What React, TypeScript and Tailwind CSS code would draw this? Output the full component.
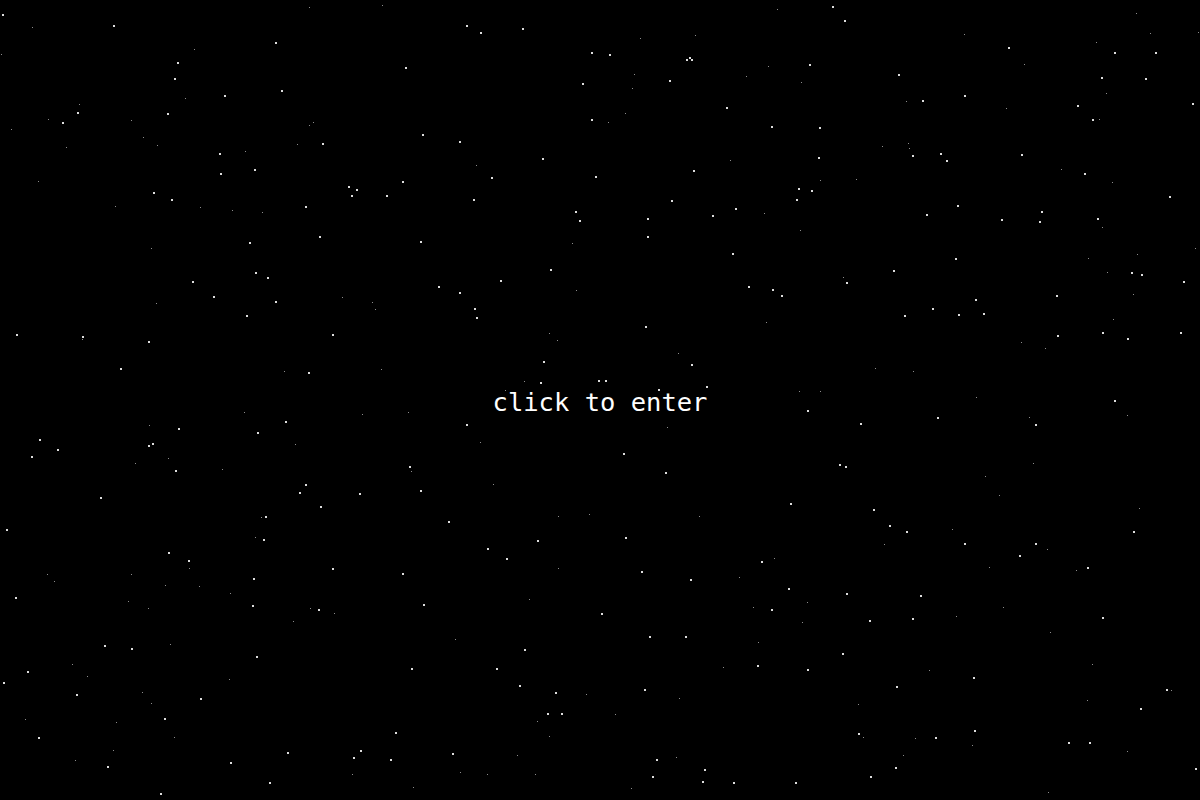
import React from "react";

// [x, y, size] — size 2 are the bright stars, size 1 the faint ones
const stars: [number, number, number][] = [
  [2,14,2],[113,25,2],[275,42,2],[177,62,2],[174,78,2],[281,90,2],[224,95,2],[77,112,2],[62,122,2],[167,113,2],
  [322,143,2],[219,153,2],[254,169,2],[220,173,2],[348,186,2],[356,189,2],[351,195,2],[386,195,2],[153,192,2],[171,199,2],
  [305,206,2],[319,236,2],[249,242,2],
  [32,27,1],[309,7,1],[382,5,1],[1,54,1],[194,49,1],[185,98,1],[79,104,1],[48,119,1],[131,120,1],[11,129,1],
  [143,137,1],[157,145,1],[66,147,1],[245,151,1],[309,125,1],[313,122,1],[297,144,1],[38,181,1],[115,206,1],[200,207,1],
  [232,210,1],[262,212,1],[151,248,1],

  [466,25,2],[480,32,2],[522,28,2],[405,67,2],[591,52,2],[609,54,2],[686,59,2],[689,57,2],[691,59,2],[669,80,2],
  [582,83,2],[726,107,2],[771,126,2],[591,119,2],[422,134,2],[459,141,2],[542,158,2],[693,170,2],[402,181,2],[491,177,2],
  [595,176,2],[798,188,2],[796,199,2],[473,199,2],[671,200,2],[735,208,2],[712,215,2],[575,211,2],[579,220,2],[647,218,2],
  [647,236,2],[420,241,2],[732,253,2],
  [777,9,1],[640,38,1],[695,35,1],[768,66,1],[746,76,1],[634,74,1],[632,88,1],[625,113,1],[608,122,1],[476,165,1],
  [730,160,1],[764,213,1],[572,243,1],

  [832,6,2],[844,20,2],[1008,47,2],[1114,52,2],[1155,52,2],[809,64,2],[898,74,2],[1101,77,2],[1145,78,2],[922,100,2],
  [964,95,2],[1077,105,2],[1192,103,2],[1092,119,2],[819,127,2],[818,157,2],[912,155,2],[940,153,2],[946,160,2],[1021,154,2],
  [1084,173,2],[811,190,2],[1169,196,2],[957,205,2],[926,214,2],[1041,211,2],[1001,219,2],[1039,221,2],[1097,218,2],[955,258,2],
  [1136,13,1],[964,34,1],[1150,33,1],[1198,32,1],[1096,42,1],[1024,64,1],[801,82,1],[906,101,1],[1006,108,1],[1106,93,1],
  [1099,119,1],[882,146,1],[908,143,1],[909,148,1],[1061,169,1],[820,180,1],[856,179,1],[1112,182,1],[1102,227,1],[800,230,1],
  [1088,258,1],[1137,254,1],[1195,248,1],

  [255,272,2],[267,277,2],[192,281,2],[213,296,2],[275,301,2],[246,315,2],[16,334,2],[82,336,2],[148,341,2],[332,334,2],
  [120,368,2],[308,372,2],[285,421,2],[257,432,2],[178,428,2],[39,439,2],[57,449,2],[31,456,2],[148,445,2],[152,443,2],
  [175,470,2],[305,484,2],[299,492,2],[359,493,2],[320,506,2],[265,516,2],[100,497,2],[6,529,2],
  [156,303,1],[342,297,1],[372,302,1],[375,309,1],[82,339,1],[284,371,1],[381,369,1],[244,412,1],[362,414,1],[149,425,1],
  [295,444,1],[135,463,1],[168,458,1],[222,469,1],[261,517,1],

  [550,269,2],[500,280,2],[438,286,2],[459,292,2],[748,286,2],[772,289,2],[781,295,2],[474,308,2],[476,317,2],[645,326,2],
  [543,361,2],[691,364,2],[540,382,2],[598,380,2],[605,380,2],[658,389,2],[706,386,2],[466,424,2],[623,453,2],[665,472,2],
  [409,466,2],[420,490,2],[448,521,2],[790,503,2],
  [505,390,1],[576,290,1],[549,333,1],[557,340,1],[678,353,1],[766,322,1],[524,381,1],[799,391,1],[408,412,1],[667,427,1],
  [480,442,1],[411,471,1],[493,484,1],[558,516,1],[589,514,1],[699,516,1],

  [893,270,2],[846,282,2],[1131,272,2],[1141,274,2],[1183,281,2],[1056,295,2],[975,299,2],[932,308,2],[904,315,2],[958,314,2],
  [983,313,2],[1057,335,2],[1102,332,2],[1127,338,2],[1180,332,2],[1114,400,2],[807,410,2],[937,417,2],[860,423,2],[1035,424,2],
  [839,464,2],[845,466,2],[873,509,2],[889,525,2],[906,531,2],[1133,531,2],
  [843,277,1],[1107,272,1],[1133,294,1],[1113,319,1],[1021,342,1],[1045,348,1],[875,368,1],[913,371,1],[820,391,1],[976,397,1],
  [1029,417,1],[1127,415,1],[1033,463,1],[985,476,1],[999,495,1],[1139,508,1],[952,529,1],

  [263,539,2],[168,552,2],[188,560,2],[332,568,2],[253,578,2],[15,597,2],[252,605,2],[318,609,2],[104,645,2],[131,648,2],
  [256,656,2],[27,671,2],[3,682,2],[76,694,2],[200,698,2],[164,718,2],[38,737,2],[395,732,2],[287,752,2],[360,750,2],
  [353,757,2],[390,759,2],[230,762,2],[107,766,2],[269,782,2],[160,793,2],
  [255,537,1],[47,574,1],[54,581,1],[131,574,1],[189,568,1],[165,585,1],[199,586,1],[230,593,1],[128,601,1],[148,608,1],
  [310,608,1],[334,613,1],[293,621,1],[170,644,1],[72,664,1],[87,676,1],[229,679,1],[142,692,1],[151,703,1],[25,719,1],
  [116,722,1],[174,737,1],[113,750,1],[75,760,1],[352,774,1],

  [537,540,2],[625,537,2],[487,548,2],[506,558,2],[402,573,2],[641,571,2],[690,579,2],[761,561,2],[788,588,2],[423,604,2],
  [601,613,2],[771,609,2],[649,636,2],[685,636,2],[524,649,2],[411,668,2],[496,668,2],[757,665,2],[519,685,2],[555,692,2],
  [644,689,2],[547,713,2],[561,713,2],[452,753,2],[656,759,2],[704,769,2],[652,776,2],[702,781,2],[733,782,2],[795,782,2],
  [558,568,1],[774,558,1],[739,577,1],[529,599,1],[753,607,1],[455,639,1],[758,642,1],[723,667,1],[586,694,1],[679,698,1],
  [615,714,1],[537,721,1],[549,736,1],[517,755,1],[676,757,1],[460,772,1],[487,774,1],[535,774,1],[413,787,1],[631,788,1],

  [964,543,2],[1035,543,2],[1019,555,2],[1087,567,2],[846,593,2],[920,595,2],[869,620,2],[912,618,2],[1102,617,2],[842,653,2],
  [807,669,2],[973,677,2],[896,686,2],[1166,689,2],[1140,708,2],[858,733,2],[935,737,2],[974,730,2],[1068,742,2],[1089,742,2],
  [895,767,2],[870,776,2],[1195,768,2],
  [884,544,1],[1047,549,1],[989,567,1],[1076,570,1],[807,602,1],[802,622,1],[1003,607,1],[956,616,1],[1050,632,1],[1092,664,1],
  [929,670,1],[1171,690,1],[858,704,1],[1087,700,1],[863,737,1],[915,738,1],[972,745,1],[903,755,1],[1127,751,1],[1048,792,1],
];

function Starfield() {
  return (
    <svg
      className="absolute inset-0 w-full h-full"
      viewBox="0 0 1200 800"
      preserveAspectRatio="none"
      shapeRendering="crispEdges"
    >
      {stars.map(([x, y, s], i) => (
        <rect key={i} x={x} y={y} width={s} height={s} fill={s === 2 ? "#dcdcdc" : "#8c8c8c"} />
      ))}
    </svg>
  );
}

export default function App() {
  return (
    <div className="relative w-full h-screen bg-black overflow-hidden cursor-pointer">
      <Starfield />
      <div className="relative h-full flex items-center justify-center">
        <p className="mt-1.5 font-['DejaVu_Sans_Mono',monospace] text-[25.5px] leading-none text-white select-none">
          click to enter
        </p>
      </div>
    </div>
  );
}
